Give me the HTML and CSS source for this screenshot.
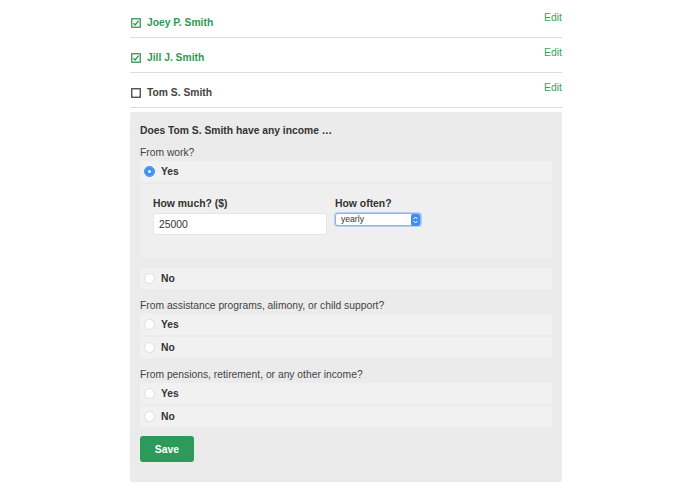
FILE: index.html
```html
<!DOCTYPE html>
<html>
<head>
<meta charset="utf-8">
<link rel="stylesheet" href="styles.css">
</head>
<body>
<div class="wrap">
  <ul class="people">
    <li class="person done">
      <span class="name"><svg class="box" width="10" height="10" viewBox="0 0 10 10"><rect x="0.75" y="0.75" width="8.5" height="8.5" fill="none" stroke="currentColor" stroke-width="1.3"/><path d="M2.4 5.2 L4.2 7 L7.6 2.6" fill="none" stroke="currentColor" stroke-width="1.4"/></svg>Joey P. Smith</span>
      <a class="edit" href="#">Edit</a>
    </li>
    <li class="person done">
      <span class="name"><svg class="box" width="10" height="10" viewBox="0 0 10 10"><rect x="0.75" y="0.75" width="8.5" height="8.5" fill="none" stroke="currentColor" stroke-width="1.3"/><path d="M2.4 5.2 L4.2 7 L7.6 2.6" fill="none" stroke="currentColor" stroke-width="1.4"/></svg>Jill J. Smith</span>
      <a class="edit" href="#">Edit</a>
    </li>
    <li class="person">
      <span class="name"><svg class="box" width="10" height="10" viewBox="0 0 10 10"><rect x="0.75" y="0.75" width="8.5" height="8.5" fill="none" stroke="currentColor" stroke-width="1.3"/></svg>Tom S. Smith</span>
      <a class="edit" href="#">Edit</a>
    </li>
  </ul>

  <form class="panel">
    <h3 class="heading">Does Tom S. Smith have any income …</h3>

    <p class="question first">From work?</p>
    <label class="option"><input type="radio" name="work" checked><span>Yes</span></label>
    <div class="details">
      <div class="field amount">
        <span class="flabel">How much? ($)</span>
        <input class="text" type="text" value="25000">
      </div>
      <div class="field often">
        <span class="flabel">How often?</span>
        <span class="select">
          <select><option>yearly</option></select>
          <svg class="stepper" width="9" height="12" viewBox="0 0 9 12"><rect width="9" height="12" rx="2" fill="#3f8ff0"/><path d="M2.6 5 L4.5 3 L6.4 5 M2.6 7 L4.5 9 L6.4 7" fill="none" stroke="#fff" stroke-width="1"/></svg>
        </span>
      </div>
    </div>
    <label class="option gap"><input type="radio" name="work"><span>No</span></label>

    <p class="question">From assistance programs, alimony, or child support?</p>
    <label class="option"><input type="radio" name="assist"><span>Yes</span></label>
    <label class="option"><input type="radio" name="assist"><span>No</span></label>

    <p class="question">From pensions, retirement, or any other income?</p>
    <label class="option"><input type="radio" name="pension"><span>Yes</span></label>
    <label class="option"><input type="radio" name="pension"><span>No</span></label>

    <button class="save" type="button">Save</button>
  </form>
</div>
</body>
</html>
```

FILE: styles.css
```css
* { box-sizing: border-box; }

body {
  margin: 0;
  background: #fff;
  font-family: "Liberation Sans", Arial, sans-serif;
  font-size: 10.3px;
  color: #333;
}

.wrap {
  width: 432px;
  margin-left: 130px;
  padding-top: 3px;
}

.people {
  list-style: none;
  margin: 0;
  padding: 0;
}

.person {
  display: flex;
  justify-content: space-between;
  align-items: flex-start;
  height: 35px;
  border-bottom: 1px solid #dcdcdc;
}

.name {
  display: flex;
  align-items: center;
  gap: 6px;
  padding-top: 14px;
  line-height: 12px;
  font-weight: bold;
  font-size: 10.3px;
  color: #444;
}

.person.done .name { color: #2f9a55; }

.box { flex: none; margin-left: 1px; }

.edit {
  padding-top: 9px;
  line-height: 12px;
  font-size: 10.4px;
  color: #3aa060;
  text-decoration: none;
}

.panel {
  margin-top: 4px;
  background: #ebebeb;
  border-radius: 2px;
  padding: 13px 10px 20px;
}

.heading {
  margin: 0;
  font-size: 10.3px;
  line-height: 12px;
  font-weight: bold;
  color: #333;
}

.question {
  margin: 11px 0 2px;
  line-height: 12px;
  color: #444;
}

.question.first { margin-top: 10px; }

.option {
  display: flex;
  align-items: center;
  gap: 6px;
  height: 21px;
  padding-left: 4px;
  margin-bottom: 2px;
  background: #f1f1f1;
  border-radius: 2px;
  font-weight: bold;
  color: #333;
}

.option.gap { margin-top: 10px; }

.option input {
  appearance: none;
  -webkit-appearance: none;
  margin: 0;
  width: 11px;
  height: 11px;
  border-radius: 50%;
  background: #fff;
  border: 1px solid #dedede;
  flex: none;
}

.option input:checked {
  background: #3d8ff0;
  border-color: #3d8ff0;
  box-shadow: inset 0 0 0 3px #3d8ff0, inset 0 0 0 6px #fff;
}

.details {
  display: flex;
  gap: 8px;
  background: #efefef;
  border-radius: 2px;
  padding: 14px 13px 23px;
}

.field {
  display: flex;
  flex-direction: column;
  gap: 3px;
}

.flabel {
  line-height: 12px;
  font-weight: bold;
  font-size: 10.4px;
  color: #333;
}

.text {
  width: 174px;
  height: 22px;
  margin: 0;
  padding: 0 5px;
  border: 1px solid #e6e6e6;
  background: #fff;
  font-family: "Liberation Sans", Arial, sans-serif;
  font-size: 10.4px;
  color: #333;
  outline: none;
}

.select {
  position: relative;
  display: block;
  width: 86px;
  height: 13px;
}

.select select {
  appearance: none;
  -webkit-appearance: none;
  display: block;
  width: 86px;
  height: 13px;
  margin: 0;
  padding: 0 0 0 5px;
  border: 1px solid #8cb6ea;
  border-radius: 3px;
  background: #fff;
  font-family: "Liberation Sans", Arial, sans-serif;
  font-size: 8.6px;
  line-height: 11px;
  color: #333;
  box-shadow: 0 0 0 1px rgba(80,150,240,0.35);
}

.stepper {
  position: absolute;
  right: 1px;
  top: 0.5px;
  pointer-events: none;
}

.save {
  display: block;
  margin-top: 9px;
  width: 54px;
  height: 26px;
  border: none;
  border-radius: 3px;
  background: #2b9a5a;
  color: #fff;
  font-family: "Liberation Sans", Arial, sans-serif;
  font-weight: bold;
  font-size: 10.4px;
}
```
